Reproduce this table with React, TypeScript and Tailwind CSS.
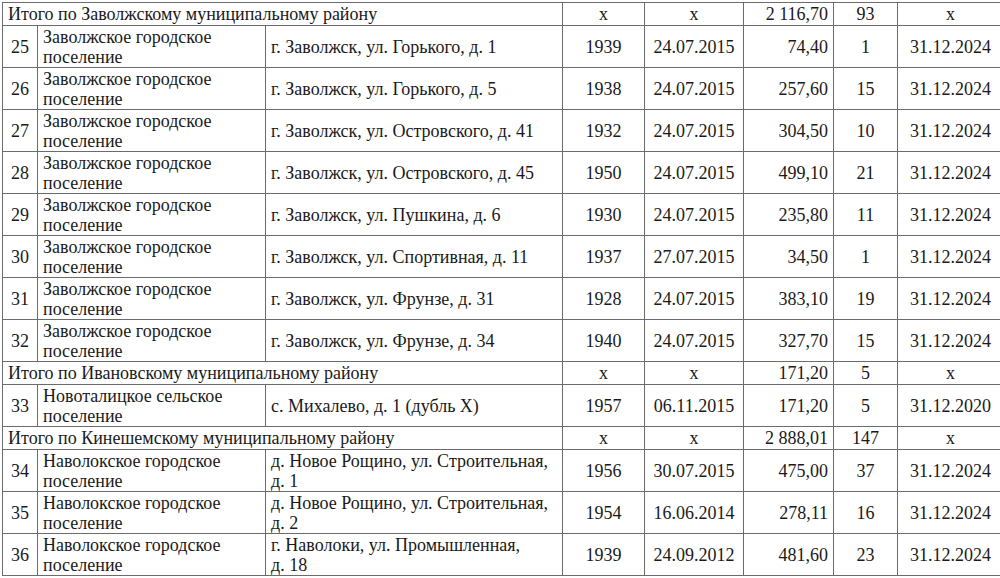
type Row =
  | { kind: 'total'; label: string; area: string; count: string }
  | {
      kind: 'item'
      n: string
      settlement: string
      address: string
      year: string
      date: string
      area: string
      count: string
      deadline: string
    }

// \u00a0 keeps "д. 18" together, as in the source document
const rows: Row[] = [
  { kind: 'total', label: 'Итого по Заволжскому муниципальному району', area: '2 116,70', count: '93' },
  { kind: 'item', n: '25', settlement: 'Заволжское городское поселение', address: 'г. Заволжск, ул. Горького, д.\u00a01', year: '1939', date: '24.07.2015', area: '74,40', count: '1', deadline: '31.12.2024' },
  { kind: 'item', n: '26', settlement: 'Заволжское городское поселение', address: 'г. Заволжск, ул. Горького, д.\u00a05', year: '1938', date: '24.07.2015', area: '257,60', count: '15', deadline: '31.12.2024' },
  { kind: 'item', n: '27', settlement: 'Заволжское городское поселение', address: 'г. Заволжск, ул. Островского, д.\u00a041', year: '1932', date: '24.07.2015', area: '304,50', count: '10', deadline: '31.12.2024' },
  { kind: 'item', n: '28', settlement: 'Заволжское городское поселение', address: 'г. Заволжск, ул. Островского, д.\u00a045', year: '1950', date: '24.07.2015', area: '499,10', count: '21', deadline: '31.12.2024' },
  { kind: 'item', n: '29', settlement: 'Заволжское городское поселение', address: 'г. Заволжск, ул. Пушкина, д.\u00a06', year: '1930', date: '24.07.2015', area: '235,80', count: '11', deadline: '31.12.2024' },
  { kind: 'item', n: '30', settlement: 'Заволжское городское поселение', address: 'г. Заволжск, ул. Спортивная, д.\u00a011', year: '1937', date: '27.07.2015', area: '34,50', count: '1', deadline: '31.12.2024' },
  { kind: 'item', n: '31', settlement: 'Заволжское городское поселение', address: 'г. Заволжск, ул. Фрунзе, д.\u00a031', year: '1928', date: '24.07.2015', area: '383,10', count: '19', deadline: '31.12.2024' },
  { kind: 'item', n: '32', settlement: 'Заволжское городское поселение', address: 'г. Заволжск, ул. Фрунзе, д.\u00a034', year: '1940', date: '24.07.2015', area: '327,70', count: '15', deadline: '31.12.2024' },
  { kind: 'total', label: 'Итого по Ивановскому муниципальному району', area: '171,20', count: '5' },
  { kind: 'item', n: '33', settlement: 'Новоталицкое сельское поселение', address: 'с. Михалево, д.\u00a01 (дубль X)', year: '1957', date: '06.11.2015', area: '171,20', count: '5', deadline: '31.12.2020' },
  { kind: 'total', label: 'Итого по Кинешемскому муниципальному району', area: '2 888,01', count: '147' },
  { kind: 'item', n: '34', settlement: 'Наволокское городское поселение', address: 'д. Новое Рощино, ул. Строительная, д.\u00a01', year: '1956', date: '30.07.2015', area: '475,00', count: '37', deadline: '31.12.2024' },
  { kind: 'item', n: '35', settlement: 'Наволокское городское поселение', address: 'д. Новое Рощино, ул. Строительная, д.\u00a02', year: '1954', date: '16.06.2014', area: '278,11', count: '16', deadline: '31.12.2024' },
  { kind: 'item', n: '36', settlement: 'Наволокское городское поселение', address: 'г. Наволоки, ул. Промышленная, д.\u00a018', year: '1939', date: '24.09.2012', area: '481,60', count: '23', deadline: '31.12.2024' },
]

const cell = 'border border-[#6b6b6b] px-[5px] py-0 align-middle'

export default function App() {
  return (
    <div className="min-h-screen bg-white pl-[2px] pt-[2px] overflow-hidden">
      <table className="table-fixed border-collapse font-['Liberation_Serif','Times_New_Roman',serif] text-[18px] leading-[20px] text-[#1a1a1a] w-[1001px]">
        <colgroup>
          <col className="w-[35px]" />
          <col className="w-[228px]" />
          <col className="w-[297px]" />
          <col className="w-[82px]" />
          <col className="w-[99px]" />
          <col className="w-[90px]" />
          <col className="w-[64px]" />
          <col className="w-[106px]" />
        </colgroup>
        <tbody>
          {rows.map((r, i) =>
            r.kind === 'total' ? (
              <tr key={i} className="h-[23px]">
                <td colSpan={3} className={cell}>{r.label}</td>
                <td className={`${cell} text-center`}>x</td>
                <td className={`${cell} text-center`}>x</td>
                <td className={`${cell} text-right`}>{r.area}</td>
                <td className={`${cell} text-center`}>{r.count}</td>
                <td className={`${cell} text-center`}>x</td>
              </tr>
            ) : (
              <tr key={i} className="h-[42px]">
                <td className={`${cell} text-center !px-0`}>{r.n}</td>
                <td className={cell}>{r.settlement}</td>
                <td className={cell}>{r.address}</td>
                <td className={`${cell} text-center`}>{r.year}</td>
                <td className={`${cell} text-center`}>{r.date}</td>
                <td className={`${cell} text-right`}>{r.area}</td>
                <td className={`${cell} text-center`}>{r.count}</td>
                <td className={`${cell} text-center`}>{r.deadline}</td>
              </tr>
            )
          )}
        </tbody>
      </table>
    </div>
  )
}
